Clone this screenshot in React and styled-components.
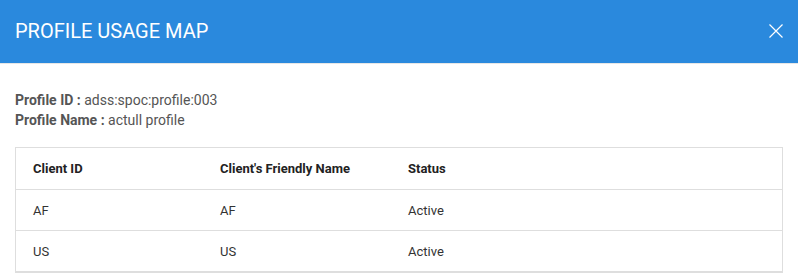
import React from "react";
import styled, { createGlobalStyle } from "styled-components";

const Global = createGlobalStyle`
  html, body { margin: 0; padding: 0; background: #fff; }
  body { font-family: Roboto, "Liberation Sans", Arial, sans-serif; }
  * { box-sizing: border-box; }
`;

const Modal = styled.div`
  width: 798px;
  background: #fff;
`;

const Header = styled.div`
  height: 64px;
  background: #2a89dd;
  border-bottom: 1px solid #e6e6e6;
  display: flex;
  align-items: center;
  justify-content: space-between;
  padding: 0 15px 1px 15px;
`;

const Title = styled.h2`
  margin: 0;
  font-size: 20px;
  font-weight: 400;
  color: #fff;
  letter-spacing: 0;
`;

const CloseButton = styled.button`
  border: 0;
  background: transparent;
  padding: 0;
  width: 14px;
  height: 14px;
  display: flex;
  cursor: pointer;
`;

const Body = styled.div`
  padding: 26px 15px 0 15px;
`;

const InfoLine = styled.div`
  font-size: 14px;
  line-height: 20px;
  color: #555;
`;

const Label = styled.b`
  font-weight: 700;
`;

const Table = styled.div`
  margin-top: 17px;
  border: 1px solid #dedede;
  border-bottom: 2px solid #dedede;
`;

const Row = styled.div`
  display: grid;
  grid-template-columns: 187px 188px 1fr;
  height: 41px;
  align-items: center;
  padding: 0 17px;
  font-size: 13px;
  color: ${(p) => (p.$head ? "#222" : "#333")};
  font-weight: ${(p) => (p.$head ? 700 : 400)};
  & + & { border-top: 1px solid #dedede; }
`;

const rows = [
  ["AF", "AF", "Active"],
  ["US", "US", "Active"],
];

export default function App() {
  return (
    <Modal>
      <Global />
      <Header>
        <Title>PROFILE USAGE MAP</Title>
        <CloseButton aria-label="Close">
          <svg width="14" height="14" viewBox="0 0 14 14">
            <path d="M0.5 0.5 L13.5 13.5 M13.5 0.5 L0.5 13.5" stroke="#fff" strokeWidth="1.2" fill="none" />
          </svg>
        </CloseButton>
      </Header>
      <Body>
        <InfoLine><Label>Profile ID :</Label> adss:spoc:profile:003</InfoLine>
        <InfoLine><Label>Profile Name :</Label> actull profile</InfoLine>
        <Table>
          <Row $head>
            <span>Client ID</span>
            <span>Client's Friendly Name</span>
            <span>Status</span>
          </Row>
          {rows.map((r, i) => (
            <Row key={i}>
              {r.map((c, j) => <span key={j}>{c}</span>)}
            </Row>
          ))}
        </Table>
      </Body>
    </Modal>
  );
}
